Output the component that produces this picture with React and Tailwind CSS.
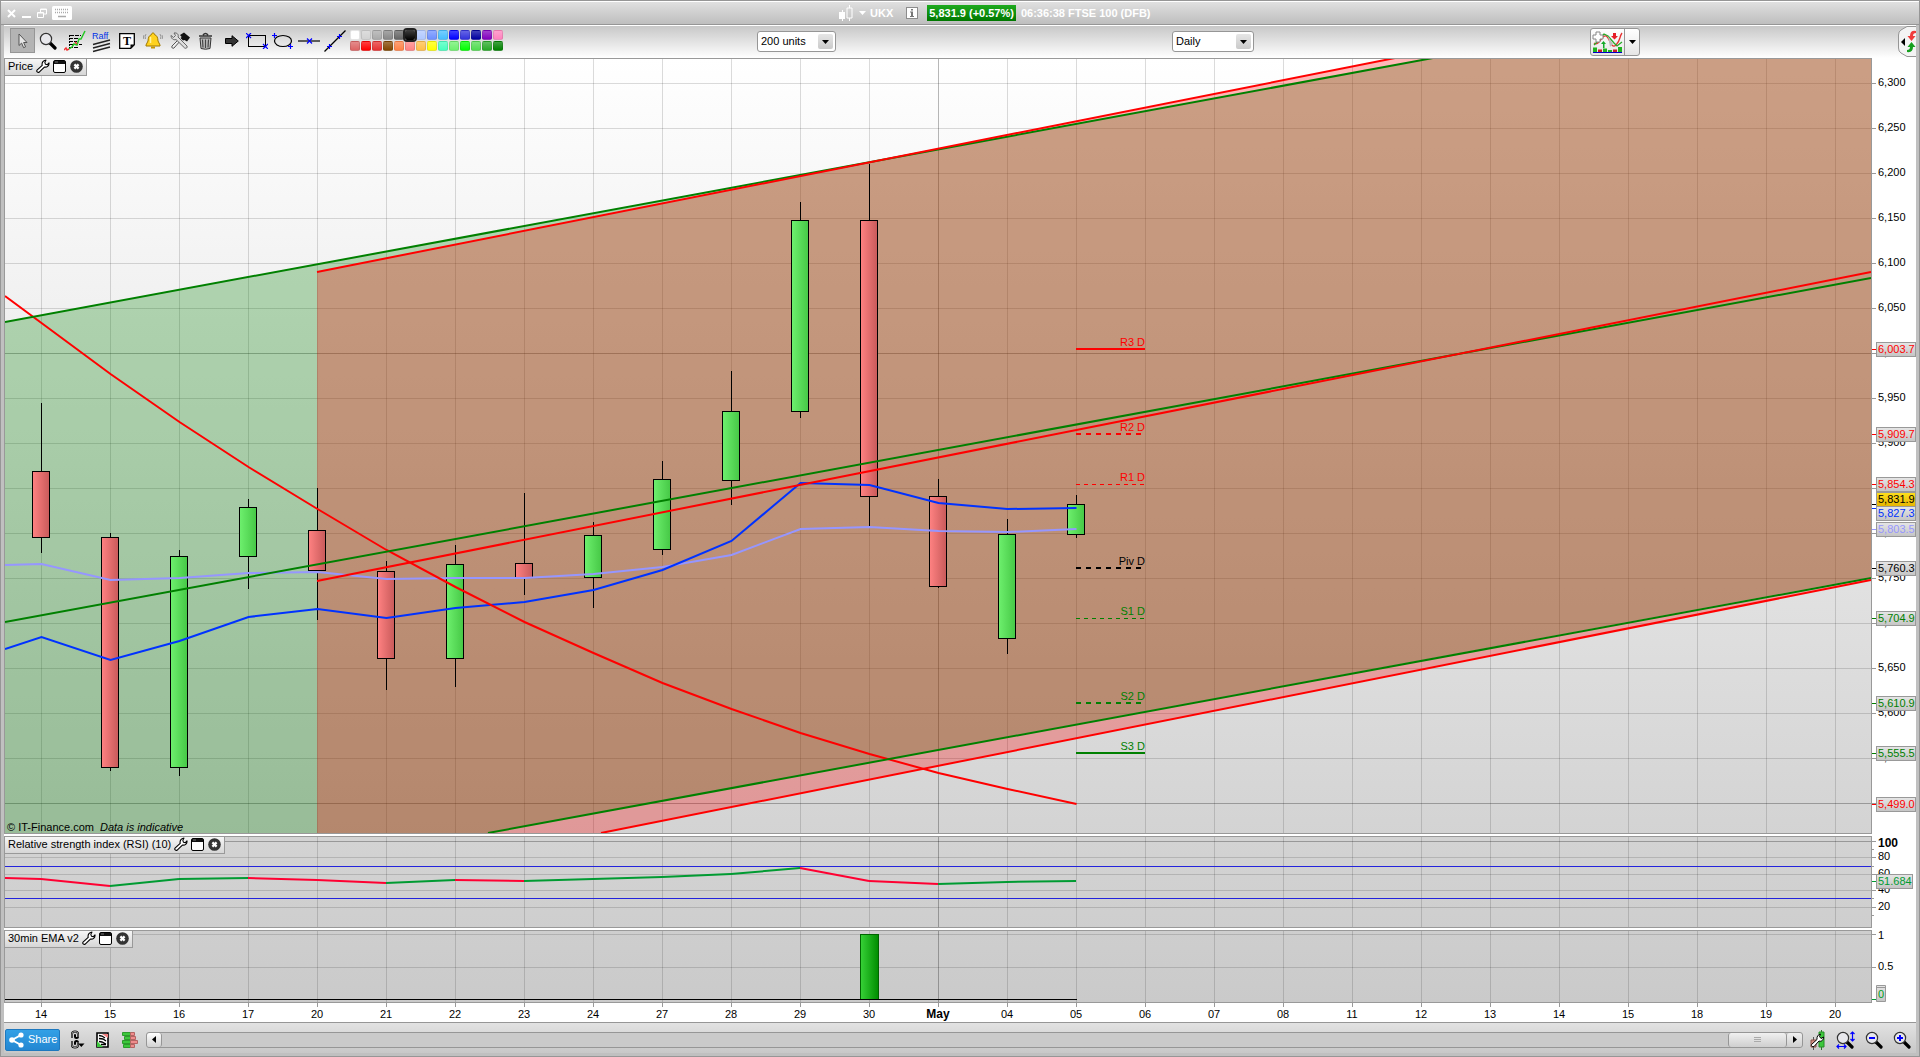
import { Fragment } from 'react';

const DAYS = [
  '14', '15', '16', '17', '20', '21', '22', '23', '24', '27', '28', '29', '30', 'May',
  '04', '05', '06', '07', '08', '11', '12', '13', '14', '15', '18', '19', '20',
];

// chart space: one unit per pixel, first column at 41, one column every 69
const colX = (i) => 41 + i * 69;
const priceY = (p) => 83 + (6300 - p) * 0.9;

const LEFT = 5;
const RIGHT = 1871;

// high, open/close top, open/close bottom, low, rising
const CANDLES = [
  [403, 471, 537, 553, false],
  [533, 537, 767, 771, false],
  [550, 556, 767, 776, true],
  [499, 507, 556, 589, true],
  [488, 530, 570, 620, false],
  [561, 571, 658, 690, false],
  [545, 564, 658, 687, true],
  [493, 563, 577, 595, false],
  [522, 535, 577, 608, true],
  [461, 479, 549, 555, true],
  [371, 411, 480, 505, true],
  [202, 220, 411, 418, true],
  [164, 220, 496, 527, false],
  [479, 496, 586, 588, false],
  [519, 534, 638, 654, true],
  [495, 504, 534, 538, true],
];

const FAST_EMA = [649, 637, 660, 641, 617, 609, 618, 608, 602, 590, 570, 541, 483, 485, 503, 509, 508];
const SLOW_EMA = [565, 564, 580, 578, 573, 572, 579, 578, 578, 574, 567, 555, 529, 527, 531, 532, 529];
const LONG_MA = [296, 323, 374, 422, 467, 509, 550, 587, 622, 653, 683, 709, 733, 754, 773, 789, 804];
const RSI = [878, 879, 886, 879, 878, 880, 883, 880, 881, 879, 877, 874, 868, 881, 884, 882, 881];

const LEVELS = [
  { name: 'R3 D', price: 6003.7, color: '#ff0000', width: 2 },
  { name: 'R2 D', price: 5909.7, color: '#ff0000', width: 2, dash: '5 5' },
  { name: 'R1 D', price: 5854.3, color: '#ff0000', width: 1, dash: '4 4' },
  { name: 'Piv D', price: 5760.3, color: '#000000', width: 2, dash: '5 5' },
  { name: 'S1 D', price: 5704.9, color: '#008000', width: 1, dash: '4 4' },
  { name: 'S2 D', price: 5610.9, color: '#008000', width: 2, dash: '5 5' },
  { name: 'S3 D', price: 5555.5, color: '#008000', width: 2 },
];

const PRICE_TAGS = [
  { text: '6,003.7', tick: 349, y: 342, color: '#ff0000' },
  { text: '5,909.7', tick: 434, y: 427, color: '#ff0000' },
  { text: '5,854.3', tick: 484, y: 477, color: '#ff0000' },
  { text: '5,803.5', tick: 529, y: 522, color: '#9696ff' },
  { text: '5,827.3', tick: 508, y: 506, color: '#0032ff' },
  { text: '5,831.9', tick: 504, y: 492, color: '#000000', fill: 'url(#tagGold)' },
  { text: '5,760.3', tick: 568, y: 561, color: '#000000' },
  { text: '5,704.9', tick: 618, y: 611, color: '#008000' },
  { text: '5,610.9', tick: 703, y: 696, color: '#008000' },
  { text: '5,555.5', tick: 753, y: 746, color: '#008000' },
  { text: '5,499.0', tick: 804, y: 797, color: '#ff0000' },
];

const SWATCHES = [
  ['#ffffff', '#d2d2d2', '#aaaaaa', '#888888', '#666666', '#000000', '#b0c8ff', '#6e90ff', '#46beff', '#0000ff', '#3232dc', '#0000a0', '#8200be', '#ff82be'],
  ['#dc6464', '#ff0000', '#e63232', '#824600', '#ff8246', '#ff8282', '#ffbe46', '#ffff00', '#46ffbe', '#6ef06e', '#00ff00', '#50dc50', '#28aa28', '#008200'],
];

const seriesPoints = (ys) =>
  ys.map((y, i) => `${i === 0 ? LEFT : colX(i - 1) + 0.5},${y}`).join(' ');

function VerticalGrid({ top, bottom }) {
  return DAYS.map((day, i) => (
    <line
      key={i}
      x1={colX(i) + 0.5}
      x2={colX(i) + 0.5}
      y1={top}
      y2={bottom}
      stroke="#000"
      strokeOpacity={day === 'May' ? 0.28 : 0.14}
    />
  ));
}

function HorizontalGrid({ ys, strong = [] }) {
  return ys.map((y) => (
    <line key={y} x1={LEFT} x2={RIGHT} y1={y + 0.5} y2={y + 0.5} stroke="#000" strokeOpacity={strong.includes(y) ? 0.28 : 0.14} />
  ));
}

function PricePlot() {
  const prices = Array.from({ length: 18 }, (_, i) => priceY(6300 - i * 50)).filter((y) => y < 833);
  return (
    <svg className="block h-full w-full" viewBox="5 59 1866 774" preserveAspectRatio="none" role="img" aria-label="FTSE 100 daily candles">
      <defs>
        <linearGradient id="rise">
          <stop offset="0" stopColor="#6ef06e" />
          <stop offset="1" stopColor="#46c846" />
        </linearGradient>
        <linearGradient id="fall">
          <stop offset="0" stopColor="#ff8282" />
          <stop offset="1" stopColor="#c85a5a" />
        </linearGradient>
      </defs>
      <VerticalGrid top={59} bottom={833} />
      <HorizontalGrid ys={prices} strong={[353, 803]} />

      <polygon points="5,322 1433,58 1871,58 1871,577 488,833 5,833" fill="#008000" fillOpacity="0.28" />
      <polygon points="317,272 1395,58 1871,58 1871,580 601,833 317,833" fill="#ff0000" fillOpacity="0.28" />

      {CANDLES.map(([high, top, bottom, low, up], i) => (
        <g key={i} stroke="#000">
          <line x1={colX(i) + 0.5} x2={colX(i) + 0.5} y1={high} y2={low} />
          <rect x={colX(i) - 8.5} y={top + 0.5} width="17" height={bottom - top} fill={up ? 'url(#rise)' : 'url(#fall)'} />
        </g>
      ))}

      <g fill="none" strokeWidth="2">
        <polyline points={seriesPoints(SLOW_EMA)} stroke="#9696ff" />
        <polyline points={seriesPoints(FAST_EMA)} stroke="#0032ff" />
        <polyline points={seriesPoints(LONG_MA)} stroke="#ff0000" />
        <g stroke="#008000">
          <line x1="5" y1="322" x2="1433" y2="58" />
          <line x1="5" y1="622" x2="1871" y2="278" />
          <line x1="488" y1="833" x2="1871" y2="578" />
        </g>
        <g stroke="#ff0000">
          <line x1="317" y1="272" x2="1395" y2="58" />
          <line x1="317" y1="581" x2="1871" y2="272" />
          <line x1="601" y1="833" x2="1871" y2="580" />
        </g>
      </g>

      {LEVELS.map((level) => {
        const y = Math.floor(priceY(level.price));
        return (
          <Fragment key={level.name}>
            <line
              x1="1076"
              x2="1145"
              y1={level.width === 1 ? y + 0.5 : y}
              y2={level.width === 1 ? y + 0.5 : y}
              stroke={level.color}
              strokeWidth={level.width}
              strokeDasharray={level.dash}
            />
            <text x="1145" y={y - 3} textAnchor="end" fill={level.color}>{level.name}</text>
          </Fragment>
        );
      })}

      <text x="7" y="831">© IT-Finance.com</text>
      <text x="100" y="831" fontStyle="italic">Data is indicative</text>
    </svg>
  );
}

function AxisTag({ text, y, tick, color, fill = 'url(#tag)', width = 39 }) {
  return (
    <g>
      <line x1="1872" x2="1876" y1={tick + 0.5} y2={tick + 0.5} stroke={color} />
      <rect x="1876.5" y={y + 0.5} width={width} height="14" fill={fill} stroke="#999" />
      <text x="1878" y={y + 11} fill={color}>{text}</text>
    </g>
  );
}

function PriceAxis() {
  return (
    <svg className="block h-full w-full" viewBox="1872 58 44 776" preserveAspectRatio="none" role="img" aria-label="Price scale">
      <defs>
        <linearGradient id="tag" x1="0" y1="0" x2="0" y2="1">
          <stop offset="0" stopColor="#e6e6e6" />
          <stop offset="1" stopColor="#c4c4c4" />
        </linearGradient>
        <linearGradient id="tagGold" x1="0" y1="0" x2="0" y2="1">
          <stop offset="0" stopColor="#ffe01e" />
          <stop offset="1" stopColor="#e6b400" />
        </linearGradient>
      </defs>
      {Array.from({ length: 17 }, (_, i) => 6300 - i * 50).map((p) => (
        <Fragment key={p}>
          <line x1="1872" x2="1876" y1={priceY(p) + 0.5} y2={priceY(p) + 0.5} stroke="#999" />
          <text x="1878" y={priceY(p) + 3}>{p.toLocaleString('en-US')}</text>
        </Fragment>
      ))}
      {PRICE_TAGS.map((tag) => (
        <AxisTag key={tag.text} {...tag} />
      ))}
    </svg>
  );
}

function RsiPlot() {
  return (
    <svg className="block h-full w-full" viewBox="5 837 1866 90" preserveAspectRatio="none" role="img" aria-label="RSI">
      <VerticalGrid top={837} bottom={927} />
      <HorizontalGrid ys={[841, 857, 874, 890, 907]} strong={[841]} />
      <line x1="5" x2="1871" y1="866.5" y2="866.5" stroke="#2323dc" />
      <line x1="5" x2="1871" y1="898.5" y2="898.5" stroke="#2323dc" />
      {RSI.slice(1).map((y, i) => (
        <line
          key={i}
          x1={i === 0 ? LEFT : colX(i - 1)}
          y1={RSI[i]}
          x2={colX(i)}
          y2={y}
          stroke={y > RSI[i] ? '#ff0032' : '#009b32'}
          strokeWidth="2"
        />
      ))}
    </svg>
  );
}

function RsiAxis() {
  return (
    <svg className="block h-full w-full" viewBox="1872 836 44 92" preserveAspectRatio="none" role="img" aria-label="RSI scale">
      <g stroke="#999">
        {[841, 857, 874, 890, 907].map((y) => (
          <line key={y} x1="1872" x2="1876" y1={y + 0.5} y2={y + 0.5} />
        ))}
        {[849, 866, 898, 915].map((y) => (
          <line key={y} x1="1872" x2="1874" y1={y + 0.5} y2={y + 0.5} />
        ))}
      </g>
      <text x="1878" y="847" fontSize="12" fontWeight="bold">100</text>
      <text x="1878" y="860">80</text>
      <text x="1878" y="877">60</text>
      <text x="1878" y="893">40</text>
      <text x="1878" y="910">20</text>
      <AxisTag text="51.684" y={874} tick={881} color="#009b32" width={36} />
    </svg>
  );
}

function EmaPlot() {
  return (
    <svg className="block h-full w-full" viewBox="5 931 1866 71" preserveAspectRatio="none" role="img" aria-label="30min EMA">
      <defs>
        <linearGradient id="signal">
          <stop offset="0" stopColor="#37d237" />
          <stop offset="1" stopColor="#008c00" />
        </linearGradient>
      </defs>
      <VerticalGrid top={931} bottom={1002} />
      <HorizontalGrid ys={[934, 967]} />
      <rect x="860.5" y="934.5" width="18" height="65" fill="url(#signal)" stroke="#006400" />
      <line x1="5" x2="1077" y1="999.5" y2="999.5" stroke="#000" />
    </svg>
  );
}

function EmaAxis() {
  return (
    <svg className="block h-full w-full" viewBox="1872 930 44 73" preserveAspectRatio="none" role="img" aria-label="EMA scale">
      <path d="M1872 934.5h4M1872 967.5h4" stroke="#999" />
      <path d="M1872 999.5h4" stroke="#009b32" />
      <text x="1878" y="939">1</text>
      <text x="1878" y="970">0.5</text>
      <path d="M1876.5 1001.5v-16h9v16z" fill="url(#tag)" stroke="#999" />
      <path d="M1876.5 987.5h9" stroke="#999" />
      <text x="1878" y="998" fill="#00a01e">0</text>
    </svg>
  );
}

function DateAxis() {
  return (
    <svg className="block h-full w-full" viewBox="4 1003 1912 19" preserveAspectRatio="none" role="img" aria-label="Dates">
      {DAYS.map((day, i) => (
        <Fragment key={i}>
          <line x1={colX(i) + 0.5} x2={colX(i) + 0.5} y1="1003" y2="1007" stroke="#999" />
          <text
            x={colX(i)}
            y="1018"
            textAnchor="middle"
            fontSize={day === 'May' ? 12 : 11}
            fontWeight={day === 'May' ? 'bold' : 'normal'}
          >
            {day}
          </text>
        </Fragment>
      ))}
    </svg>
  );
}

function WrenchIcon() {
  return (
    <svg width="14" height="14" viewBox="0 0 14 14" aria-hidden="true">
      <path
        d="M1 11.2L6.2 6.4C5.6 3.8 7 1.4 10 1L8.8 3.2l.6 2 2 .4L13 3.8c.3 2.6-1.6 4.7-4.6 4.3L3.2 13.2C1.6 13.8.2 12.4 1 11.2z"
        fill="#fff"
        stroke="#000"
        strokeWidth="1.1"
        strokeLinejoin="round"
      />
    </svg>
  );
}

function PanelTitle({ title }) {
  return (
    <div className="absolute top-0 left-0 flex h-[17px] items-center border-r border-b border-[#999] bg-linear-to-b from-[#f6f6f6] to-[#d6d6d6] px-[3px] pb-[2px]">
      <span className="mr-[3px] whitespace-nowrap">{title}</span>
      <button type="button" aria-label={`${title} settings`} className="mr-[3px]">
        <WrenchIcon />
      </button>
      <button type="button" aria-label={`Maximise ${title}`} className="mr-1">
        <svg className="block" width="13" height="13" viewBox="0 0 13 13" aria-hidden="true">
          <rect x=".5" y=".5" width="12" height="12" rx="1.5" fill="#fff" stroke="#000" />
          <path d="M1 1h11v3H1z" fill="#111" />
          <path d="M2 2h3" stroke="#777" />
        </svg>
      </button>
      <button type="button" aria-label={`Close ${title}`}>
        <svg className="block" width="13" height="13" viewBox="0 0 13 13" aria-hidden="true">
          <circle cx="6.5" cy="6.5" r="6.3" fill="#333" />
          <path d="M4.4 4.4l4.2 4.2M8.6 4.4L4.4 8.6" stroke="#fff" strokeWidth="2.2" />
        </svg>
      </button>
    </div>
  );
}

function Panel({ title, plot, axis, className }) {
  return (
    <section className={`flex ${className}`}>
      <div className="relative min-w-0 flex-1 border border-[#999]">
        {plot}
        <PanelTitle title={title} />
      </div>
      <div className="w-11">{axis}</div>
    </section>
  );
}

function IconButton({ label, className = '', children }) {
  return (
    <button type="button" aria-label={label} className={`flex shrink-0 items-center justify-center ${className}`}>
      {children}
    </button>
  );
}

function Magnifier({ children }) {
  return (
    <>
      <path d="M11 11l5 5" stroke="#000" strokeWidth="3.2" strokeLinecap="round" />
      <circle cx="7" cy="7" r="5.6" fill="#e8e8ec" stroke="#333" strokeWidth="1.2" />
      {children}
    </>
  );
}

function DrawingTools() {
  return (
    <>
      <IconButton label="Select" className="ml-[6px] h-[25px] w-[25px] border border-[#969696] bg-[#b4b4b4]">
        <svg width="10" height="16" viewBox="0 0 10 16" aria-hidden="true">
          <path d="M1 1v11.5l2.6-2.4 2 4.6 2-.9-2-4.3H9z" fill="#e6e6e6" stroke="#555" />
        </svg>
      </IconButton>
      <IconButton label="Zoom" className="ml-1 w-[18px]">
        <svg width="18" height="18" viewBox="0 0 18 18"><Magnifier /></svg>
      </IconButton>
      <IconButton label="Free drawing" className="ml-[7px] w-[22px]">
        <svg width="22" height="22" viewBox="0 0 22 22">
          <path d="M6 5.5h11M5 8.5h10M5 11.5h8M5 14.5h13M5 17.5h9" stroke="#000" strokeDasharray="4 1" />
          <path d="M5.5 5v11" stroke="#000" strokeDasharray="2 1" />
          <path d="M5 19l3-2 2-3 3 1 2-6 2 0 4-8" fill="none" stroke="#23c823" strokeWidth="1.5" />
          <path d="M0 20l2-2 1 2 2-1M11 12l2 2" fill="none" stroke="#f03232" strokeWidth="1.5" />
        </svg>
      </IconButton>
      <IconButton label="Raff regression channel" className="ml-[5px] w-5">
        <svg className="overflow-visible" width="19" height="22" viewBox="0 0 19 22">
          <text x="0" y="9" fontSize="9" fill="#0032e6">Raff</text>
          <path d="M1 14.5L18 10M1 18L18 13.5M1 21.5L18 17" stroke="#222" strokeWidth="1.3" />
        </svg>
      </IconButton>
      <IconButton label="Text" className="ml-2 w-4">
        <svg width="16" height="16" viewBox="0 0 16 16">
          <path d="M.7.7h14.6v11l-3.6 3.6H.7z" fill="#fff" stroke="#000" strokeWidth="1.3" />
          <path d="M15 11.5h-3.5V15z" fill="#000" />
          <text x="8" y="12" fontSize="12" fontWeight="bold" textAnchor="middle" fontFamily="Liberation Serif, serif">T</text>
        </svg>
      </IconButton>
      <IconButton label="Alert" className="ml-2 w-5">
        <svg width="20" height="18" viewBox="0 0 20 18">
          <path d="M10 1c1 0 1.5.7 1.5 1.6 2.6.9 3.3 3 3.5 6.4l2 4v1H3v-1l2-4c.2-3.4.9-5.5 3.5-6.4C8.5 1.7 9 1 10 1z" fill="#ffd21e" stroke="#a07800" />
          <path d="M7.5 5v6" stroke="#fff3a0" strokeWidth="1.5" />
          <path d="M8 14.5h4v2H8z" fill="#c89600" />
          <path d="M3 2Q1.5 4.5 2.5 7M1 3Q0 5 .8 7M17 2q1.5 2.5.5 5M19 3q1 2 .2 4" fill="none" stroke="#999" />
        </svg>
      </IconButton>
      <IconButton label="Tools" className="ml-[7px] w-5">
        <svg width="20" height="18" viewBox="0 0 20 18">
          <path d="M11 8L4 16c-1 1-3-.5-2-2l7-7z" fill="#eee" stroke="#555" />
          <path d="M1 3.5L3.5 5.5 5.5 3.5 4 1c3-.5 5 1.5 4 4l9 9c.8 1.5-.9 3-2.3 2L6 7.5C3.5 8.5 1 6.5 1 3.5z" fill="#ddd" stroke="#666" />
          <path d="M10 3l4-2.5 6 5-3 4-2.5-1.5-1.5.5L10.5 6l1.2-1z" fill="#111" />
        </svg>
      </IconButton>
      <IconButton label="Delete" className="ml-2 w-[15px]">
        <svg width="15" height="18" viewBox="0 0 15 18">
          <path d="M1 4h13M5 3q2.5-3 5 0" stroke="#333" strokeWidth="1.6" fill="none" />
          <path d="M2 6h11l-1 10.5q-4.5 1.5-9 0z" fill="#bbb" stroke="#333" />
          <path d="M4.5 7.5l.5 8M7.5 7.5v8.5M10.5 7.5l-.5 8" stroke="#444" strokeWidth="1.2" />
        </svg>
      </IconButton>
      <IconButton label="Arrow" className="ml-3 w-[14px]">
        <svg width="14" height="12" viewBox="0 0 14 12">
          <path d="M.5 3.5H7V.7L13.3 6 7 11.3V8.5H.5z" fill="#333" stroke="#000" />
        </svg>
      </IconButton>
      <IconButton label="Rectangle" className="ml-[7px] w-[22px]">
        <svg width="22" height="16" viewBox="0 0 22 16">
          <rect x="2.5" y="2.5" width="17" height="11" fill="none" stroke="#000" />
          <path d="M0 0l5 5M5 0L0 5M17 11l5 5M22 11l-5 5" stroke="#00f" strokeWidth="1.2" />
        </svg>
      </IconButton>
      <IconButton label="Ellipse" className="ml-1 w-[22px]">
        <svg width="22" height="16" viewBox="0 0 22 16">
          <ellipse cx="11" cy="8" rx="8.5" ry="5.5" fill="none" stroke="#000" strokeWidth="1.2" />
          <path d="M0 2.5h5M2.5 0v5M16 13.5h5M18.5 11v5" stroke="#00f" strokeWidth="1.2" />
        </svg>
      </IconButton>
      <IconButton label="Segment" className="ml-1 w-[22px]">
        <svg width="22" height="8" viewBox="0 0 22 8">
          <path d="M0 4h22" stroke="#000" strokeWidth="1.2" />
          <path d="M9 1.5l5 5M14 1.5l-5 5" stroke="#00f" strokeWidth="1.2" />
        </svg>
      </IconButton>
      <IconButton label="Trend line" className="ml-1 w-[22px]">
        <svg width="22" height="22" viewBox="0 0 22 22">
          <path d="M.5 21.5L21.5.5" stroke="#000" strokeWidth="1.3" />
          <path d="M3 16.5h5M5.5 14v5M13 6.5h5M15.5 4v5" stroke="#00f" strokeWidth="1.2" />
        </svg>
      </IconButton>
    </>
  );
}

function Palette() {
  return (
    <div className="ml-1 flex flex-col gap-px" role="group" aria-label="Colours">
      {SWATCHES.map((row, r) => (
        <div key={r} className="flex gap-px">
          {row.map((color) => (
            <button
              key={color}
              type="button"
              aria-label={color}
              className={`h-[10px] w-[10px] rounded-xs bg-linear-to-b from-white/25 to-transparent ${
                color === '#000000' ? 'relative z-10 outline-2 outline-[#222]' : 'border border-black/10'
              }`}
              style={{ backgroundColor: color }}
            />
          ))}
        </div>
      ))}
    </div>
  );
}

function Dropdown({ label, value, options, className }) {
  return (
    <div className={`relative h-[21px] ${className}`}>
      <select
        aria-label={label}
        defaultValue={value}
        className="block h-full w-full appearance-none rounded-[3px] border border-[#969696] bg-white pl-[3px] text-[11px]"
      >
        {options.map((option) => (
          <option key={option}>{option}</option>
        ))}
      </select>
      <span className="pointer-events-none absolute top-[3px] right-[3px] flex h-[15px] w-[15px] items-center justify-center rounded-xs bg-linear-to-b from-[#e6e6e6] to-[#cacaca]">
        <svg width="7" height="4" viewBox="0 0 7 4"><path d="M0 0h7L3.5 4z" /></svg>
      </span>
    </div>
  );
}

function TitleBar() {
  return (
    <header className="grid h-6 grid-cols-[835fr_1077fr] items-center border-t border-b border-t-white border-b-[#969696] bg-linear-to-b from-[#e0e0e0] to-[#bebebe] px-[3px] font-bold text-white">
      <div className="flex items-center pl-[3px]">
        <IconButton label="Close">
          <svg width="9" height="9" viewBox="0 0 9 9"><path d="M1 1l7 7M8 1L1 8" stroke="#fff" strokeWidth="2" /></svg>
        </IconButton>
        <IconButton label="Minimise" className="ml-[6px]">
          <svg width="9" height="9" viewBox="0 0 9 9"><path d="M0 8h9" stroke="#fff" strokeWidth="2" /></svg>
        </IconButton>
        <IconButton label="Restore" className="ml-[6px]">
          <svg width="10" height="10" viewBox="0 0 10 10">
            <path d="M3.5 4V1h6v5H7M.5 4.5h6v5h-6zM3.5 1.5h6M.5 5h6" fill="none" stroke="#fff" />
          </svg>
        </IconButton>
        <IconButton label="Keyboard" className="ml-[5px]">
          <svg width="20" height="14" viewBox="0 0 20 14">
            <rect width="20" height="14" rx="1.5" fill="#fff" />
            <path d="M3 3.5h14M3 6.5h14" stroke="#aaa" strokeDasharray="1 1" strokeWidth="1.5" />
            <path d="M6 10.5h8" stroke="#aaa" strokeWidth="1.5" />
          </svg>
        </IconButton>
      </div>
      <div className="flex items-center">
        <svg width="14" height="16" viewBox="0 0 14 16" aria-hidden="true">
          <path d="M3.5 5v11M10.5 0v3M10.5 13v3" stroke="#fff" />
          <path d="M0 7h6v7H0z" fill="#fff" />
          <path d="M8 3h5v10H8z" fill="none" stroke="#fff" />
        </svg>
        <svg className="ml-[6px]" width="7" height="4" viewBox="0 0 7 4" aria-hidden="true"><path d="M0 0h7L3.5 4z" fill="#fff" /></svg>
        <span className="ml-1">UKX</span>
        <IconButton label="Information" className="ml-[13px]">
          <svg width="12" height="12" viewBox="0 0 12 12">
            <rect x=".5" y=".5" width="11" height="11" fill="#fff" stroke="#8c8c8c" />
            <path d="M5 2h2v1.5H5zM4 4.5h3V9h1v1H4V9h1V5.5H4z" fill="#777" />
          </svg>
        </IconButton>
        <span className="ml-[9px] bg-[#0a8c0a] bg-linear-to-b from-[#1eaa1e] to-[#007800] px-[2px] leading-[16px] whitespace-nowrap">5,831.9 (+0.57%)</span>
        <span className="ml-[5px] whitespace-nowrap">06:36:38 FTSE 100 (DFB)</span>
      </div>
    </header>
  );
}

function Toolbar() {
  return (
    <div className="grid h-[33px] grid-cols-[753fr_415fr_418fr_326fr] items-center border-t border-white bg-linear-to-b from-[#c8c8c8] to-white pb-px">
      <div className="flex items-center pb-[2px]">
        <DrawingTools />
        <Palette />
      </div>
      <Dropdown label="Units" value="200 units" options={['100 units', '200 units', '500 units']} className="w-[79px]" />
      <Dropdown label="Timeframe" value="Daily" options={['Hourly', 'Daily', 'Weekly']} className="w-[82px]" />
      <div className="flex items-center justify-between">
        <div className="flex h-7 rounded-[3px] border border-[#969696] bg-linear-to-b from-white to-[#e6e6e6]">
          <IconButton label="Add indicator" className="w-[34px] border-r border-[#969696]">
            <svg width="31" height="22" viewBox="0 0 31 22">
              <path d="M2 12C7 16 10 3 14 5s5 14 10 9 3-8 6-12" fill="none" stroke="#e63232" strokeWidth="1.3" />
              <path d="M2 14l5-5 5-6 4 2 6 7 3 3 5-4" fill="none" stroke="#28aa28" strokeWidth="1.3" />
              <path d="M16 5l5 8-3 3z" fill="#bbb" />
              <path d="M4 1h4v3h3v4H8v3H4V8H1V4h3z" fill="#fff" stroke="#888" />
              <path d="M21 2h3v3h2l-3.5 3.5L19 5h2z" fill="#e61e28" />
              <path d="M11 17v-4H9l2.5-3L14 13h-1.5v4z" fill="#14aa28" />
              <path d="M1 16.5h4V21H1zM11 17.5h4V21h-4zM16 19h4v2h-4zM26 16h4v5h-4z" fill="#1eb41e" />
              <path d="M6 18.5h4V21H6zM21 18.5h4V21h-4z" fill="#c81e28" />
              <path d="M1 21.5h29" stroke="#0000c8" />
            </svg>
          </IconButton>
          <IconButton label="Indicator menu" className="w-[14px]">
            <svg width="7" height="4" viewBox="0 0 7 4"><path d="M0 0h7L3.5 4z" /></svg>
          </IconButton>
        </div>
        <IconButton label="Trading panel">
          <svg width="18" height="31" viewBox="0 0 18 31">
            <path d="M18 .5H9L3 4Q.5 5.5.5 9v13q0 3.5 2.5 5l6 3.5h9" fill="#f4f4f4" stroke="#969696" />
            <path d="M3 16L7 12v8z" fill="#000" />
            <path d="M18 5q-6-1-6 5h-2.500l4 5 4-5H15q0-3 3-3z" fill="#f03c3c" />
            <path d="M9 26q6 1 6-5h2.500l-4-5-4 5H12q0 3-3 3z" fill="#14a01e" />
          </svg>
        </IconButton>
      </div>
    </div>
  );
}

function BottomBar() {
  return (
    <footer className="flex h-[31px] items-center border-t border-[#969696] bg-linear-to-b from-[#e2e2e2] to-[#c8c8c8] pt-[3px] pr-[5px] pl-px">
      <button type="button" className="mr-2 flex h-[22px] w-[55px] items-center rounded-[2px] border border-[#1e78be] bg-linear-to-b from-[#32a0e6] to-[#2387d2] pl-[3px] text-white">
        <svg width="15" height="16" viewBox="0 0 15 16" aria-hidden="true">
          <path d="M12 3L3 8l9 5" fill="none" stroke="#fff" strokeWidth="2" />
          <circle cx="12" cy="3" r="2.6" fill="#fff" />
          <circle cx="3" cy="8" r="2.8" fill="#fff" />
          <circle cx="12" cy="13" r="2.6" fill="#fff" />
        </svg>
        <span className="ml-1">Share</span>
      </button>
      <IconButton label="Link charts" className="w-[18px]">
        <svg width="16" height="19" viewBox="0 0 16 19">
          <g fill="none" strokeLinecap="round">
            <path d="M3 7V4Q3 1.500 6 1.500T9 4v2.500Q9 8 7.500 8T6 6.500V5M3 12v3Q3 17.500 6 17.500T9 15v-2.500Q9 11 7.500 11T6 12.500V14" stroke="#000" strokeWidth="2" />
            <path d="M3 7V4Q3 1.500 6 1.500T9 4v2.500M3 12v3Q3 17.500 6 17.500T9 15v-2.500" stroke="#ddd" strokeWidth=".7" />
          </g>
          <path d="M9 13.5h6.500l-3.200 3.500z" fill="#000" />
        </svg>
      </IconButton>
      <IconButton label="Order list" className="ml-[10px]">
        <svg width="13" height="16" viewBox="0 0 13 16">
          <path d="M1 1h11v14H1z" fill="#fff" stroke="#000" strokeWidth="1.6" />
          <path d="M6 2h6v4z" fill="#f08080" />
          <path d="M1 9l6 6H1z" fill="#3cc83c" />
          <path d="M3 3.5l3 .5 3 2M3 6.5l4 .5 3 2M3 9.5l3 .5 4 2M5 12.5h5" fill="none" stroke="#000" strokeWidth="1.3" />
        </svg>
      </IconButton>
      <IconButton label="Market depth" className="mr-2 ml-[13px]">
        <svg width="16" height="16" viewBox="0 0 16 16">
          <path d="M.5.5h8v3h-8zM2.5 4.5h6v3h-6zM.5 8.5h8v3h-8zM1.5 12.5h7v3h-7z" fill="#3cc83c" stroke="#2d9b2d" />
          <path d="M8.5.5h4v3h-4zM8.5 4.5h5v3h-5zM8.5 8.5h7v3h-7zM8.5 12.5h4v3h-4z" fill="#f08c8c" stroke="#b46464" />
        </svg>
      </IconButton>
      <div className="flex h-4 min-w-0 flex-1 items-stretch justify-between rounded-[3px] border border-[#969696] bg-[#cacaca]" role="scrollbar" aria-controls="charts" aria-valuenow={97} aria-orientation="horizontal">
        <IconButton label="Scroll left" className="w-[15px] rounded-[3px] border-r border-[#969696] bg-linear-to-b from-white to-[#d2d2d2]">
          <svg width="4" height="7" viewBox="0 0 4 7"><path d="M4 0v7L0 3.5z" /></svg>
        </IconButton>
        <div className="flex">
          <div className="flex w-[59px] flex-col items-center justify-center gap-px rounded-[3px] border-x border-[#969696] bg-linear-to-b from-[#f0f0f0] to-[#cfcfcf]">
            <i className="h-px w-[7px] bg-[#aaa]" />
            <i className="h-px w-[7px] bg-[#aaa]" />
            <i className="h-px w-[7px] bg-[#aaa]" />
          </div>
          <IconButton label="Scroll right" className="w-[15px] rounded-[3px] bg-linear-to-b from-[#f0f0f0] to-[#cfcfcf]">
            <svg width="4" height="7" viewBox="0 0 4 7"><path d="M0 0v7l4-3.5z" /></svg>
          </IconButton>
        </div>
      </div>
      <IconButton label="Chart settings" className="ml-[7px]">
        <svg width="16" height="20" viewBox="0 0 16 20">
          <path d="M3.5 7v13" stroke="#555" />
          <path d="M1 10h5v7H1z" fill="#d28c82" stroke="#8c5046" />
          <path d="M11.5 0v20" stroke="#287828" />
          <path d="M9 2h5v15H9z" fill="#3cc83c" stroke="#288c28" />
          <path d="M1.5 14.5L7 9.5C6.5 7 8 4.5 10.5 4L9.5 6.5l1.5 2 2.5-1.5c0 3-2 5-4.5 4L4 16.5c-1.5.8-3.2-.6-2.5-2z" fill="#fff" stroke="#000" />
        </svg>
      </IconButton>
      <IconButton label="Fit" className="ml-[10px]">
        <svg width="20" height="18" viewBox="0 0 20 18">
          <Magnifier />
          <path d="M16.5 1v9M14.5 3l2-2 2 2M14.5 8l2 2 2-2M1 15.5h9M3 13.5l-2 2 2 2M8 13.5l2 2-2 2" fill="none" stroke="#00f" strokeWidth="1.2" />
        </svg>
      </IconButton>
      <IconButton label="Zoom out" className="ml-[9px]">
        <svg width="18" height="18" viewBox="0 0 18 18"><Magnifier><path d="M4 7h6" stroke="#00f" strokeWidth="2" /></Magnifier></svg>
      </IconButton>
      <IconButton label="Zoom in" className="ml-[10px]">
        <svg width="18" height="18" viewBox="0 0 18 18"><Magnifier><path d="M4 7h6M7 4v6" stroke="#00f" strokeWidth="2" /></Magnifier></svg>
      </IconButton>
    </footer>
  );
}

export default function App() {
  return (
    <div className="flex h-screen flex-col overflow-hidden border border-[#969696] bg-[#c0c0c0] font-['Liberation_Sans',Arial,sans-serif] text-[11px] text-black">
      <TitleBar />
      <div className="mx-[3px] mb-[3px] flex min-h-0 flex-1 flex-col bg-white">
        <Toolbar />
        <main id="charts" className="flex min-h-0 flex-1 flex-col">
          <div className="relative flex min-h-0 flex-1 flex-col">
            <div className="absolute inset-y-0 right-11 left-0 bg-linear-to-b from-white to-[#cacaca]" />
            <Panel className="relative min-h-0 flex-1" title="Price" plot={<PricePlot />} axis={<PriceAxis />} />
            <div className="relative h-[2px] bg-white" />
            <Panel className="relative h-[92px]" title="Relative strength index (RSI) (10)" plot={<RsiPlot />} axis={<RsiAxis />} />
            <div className="relative h-[2px] bg-white" />
            <Panel className="relative h-[73px]" title="30min EMA v2" plot={<EmaPlot />} axis={<EmaAxis />} />
          </div>
          <div className="h-[19px]">
            <DateAxis />
          </div>
        </main>
        <BottomBar />
      </div>
    </div>
  );
}
